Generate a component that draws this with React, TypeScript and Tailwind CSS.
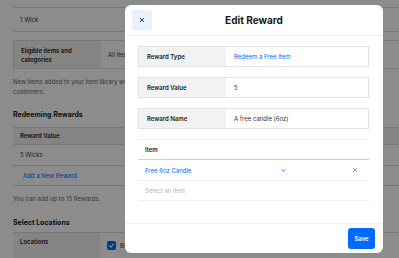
import React from "react";

function XIcon({ className }: { className?: string }) {
  return (
    <svg viewBox="0 0 10 10" className={className} fill="none" stroke="currentColor" strokeWidth="1.4" strokeLinecap="round">
      <path d="M2 2 L8 8 M8 2 L2 8" />
    </svg>
  );
}

function Chevron({ className }: { className?: string }) {
  return (
    <svg viewBox="0 0 10 6" className={className} fill="none" stroke="currentColor" strokeWidth="1.6" strokeLinecap="round" strokeLinejoin="round">
      <path d="M1.5 1.2 L5 4.6 L8.5 1.2" />
    </svg>
  );
}

function Field({ label, value, blue }: { label: string; value: string; blue?: boolean }) {
  return (
    <div className="flex h-[21px] border border-[#e3e3e3]">
      <div className="w-[87px] bg-[#f2f2f2] flex items-center pl-[8px] font-semibold text-[6px] text-[#1a1a1a]">{label}</div>
      <div className={"flex-1 flex items-center pl-[8px] text-[6px] " + (blue ? "text-[#006aff]" : "text-[#333]")}>{value}</div>
    </div>
  );
}

export default function App() {
  return (
    <div className="relative w-[399px] h-[258px] overflow-hidden bg-white" style={{ fontFamily: "Inter, 'Noto Sans', sans-serif" }}>
      {/* background page */}
      <div className="w-[440px] pl-[13px] text-[6px] text-[#333]">
        <div className="h-[7px]" />
        <div className="border-t border-b border-[#ddd] h-[25px] flex items-center pl-[7px]">1 Wick</div>
        <div className="h-[8px]" />
        <div className="flex h-[29px] border border-[#ddd]">
          <div className="w-[87px] bg-[#f0f0f0] pl-[7px] pt-[5px] font-semibold text-[#1a1a1a] leading-[9px]">
            Eligible items and<br />categories
          </div>
          <div className="flex-1 flex items-center pl-[7px]">All items</div>
        </div>
        <div className="mt-[8px] leading-[10px] text-[#666]">
          New items added to your item library will be automatically eligible for rewards for your<br />customers.
        </div>
        <div className="mt-[13px] font-bold text-[7px] text-[#1a1a1a]">Redeeming Rewards</div>
        <div className="mt-[6px] border-t border-[#ddd]">
          <div className="h-[17px] bg-[#f0f0f0] flex items-center pl-[7px] font-semibold text-[#1a1a1a] border-b border-[#ddd]">Reward Value</div>
          <div className="h-[21px] flex items-center pl-[7px] border-b border-[#ddd]">5 Wicks</div>
          <div className="h-[20px] flex items-center pl-[10px] border-b border-[#ddd] text-[#006aff]">Add a New Reward</div>
        </div>
        <div className="mt-[8px] text-[#666]">You can add up to 15 Rewards.</div>
        <div className="mt-[15px] font-bold text-[7px] text-[#1a1a1a]">Select Locations</div>
        <div className="mt-[4px] flex h-[40px] border-t border-[#ddd]">
          <div className="w-[87px] bg-[#f0f0f0] pl-[7px] pt-[4px] font-semibold text-[#1a1a1a]">Locations</div>
          <div className="flex-1 pl-[7px] pt-[8px] flex items-start gap-[4px]">
            <div className="w-[9px] h-[9px] rounded-[2px] bg-[#006aff] flex items-center justify-center">
              <svg viewBox="0 0 10 10" className="w-[7px] h-[7px]" fill="none" stroke="white" strokeWidth="1.6"><path d="M2 5.2 L4.2 7.3 L8 2.8" /></svg>
            </div>
            <span>Bees Candles</span>
          </div>
        </div>
      </div>

      {/* overlay */}
      <div className="absolute inset-0 bg-black/45" />

      {/* modal */}
      <div className="absolute left-[125px] top-[5px] w-[258px] h-[248px] bg-white rounded-[6px] flex flex-col">
        <div className="relative h-[31px] border-b border-[#eeeeee] flex items-center justify-center">
          <button className="absolute left-[7px] top-[5px] w-[20px] h-[20px] rounded-[3px] bg-[#e8f1fe] flex items-center justify-center text-[#1a1a1a]">
            <XIcon className="w-[6px] h-[6px]" />
          </button>
          <div className="font-bold text-[10px] text-[#1a1a1a]">Edit Reward</div>
        </div>
        <div className="flex-1 px-[13px] pr-[14px] pt-[10px] flex flex-col">
          <div className="flex flex-col gap-[10px]">
            <Field label="Reward Type" value="Redeem a Free Item" blue />
            <Field label="Reward Value" value="5" />
            <Field label="Reward Name" value="A free candle (6oz)" />
          </div>
          <div className="mt-[10px] border-t border-[#f0f0f0]">
            <div className="h-[20px] flex items-center pl-[7px] font-semibold text-[6px] text-[#1a1a1a] border-b border-[#cfcfcf]">Item</div>
            <div className="h-[21px] flex items-center pl-[7px] border-b border-[#f0f0f0] text-[6px] text-[#006aff]">
              <span className="w-[136px]">Free 6oz Candle</span>
              <Chevron className="w-[5px] h-[3px] text-[#006aff]" />
              <span className="flex-1" />
              <XIcon className="w-[6px] h-[6px] text-[#888] mr-[11px]" />
            </div>
            <div className="h-[20px] flex items-center pl-[7px] border-b border-[#f0f0f0] text-[6px] text-[#b5b5b5]">Select an item</div>
          </div>
        </div>
        <div className="h-[30px] border-t border-[#f0f0f0] flex items-start justify-end pr-[8px] pt-[4px]">
          <button className="w-[27px] h-[21px] rounded-[3px] bg-[#006aff] text-white font-semibold text-[6px]">Save</button>
        </div>
      </div>
    </div>
  );
}
